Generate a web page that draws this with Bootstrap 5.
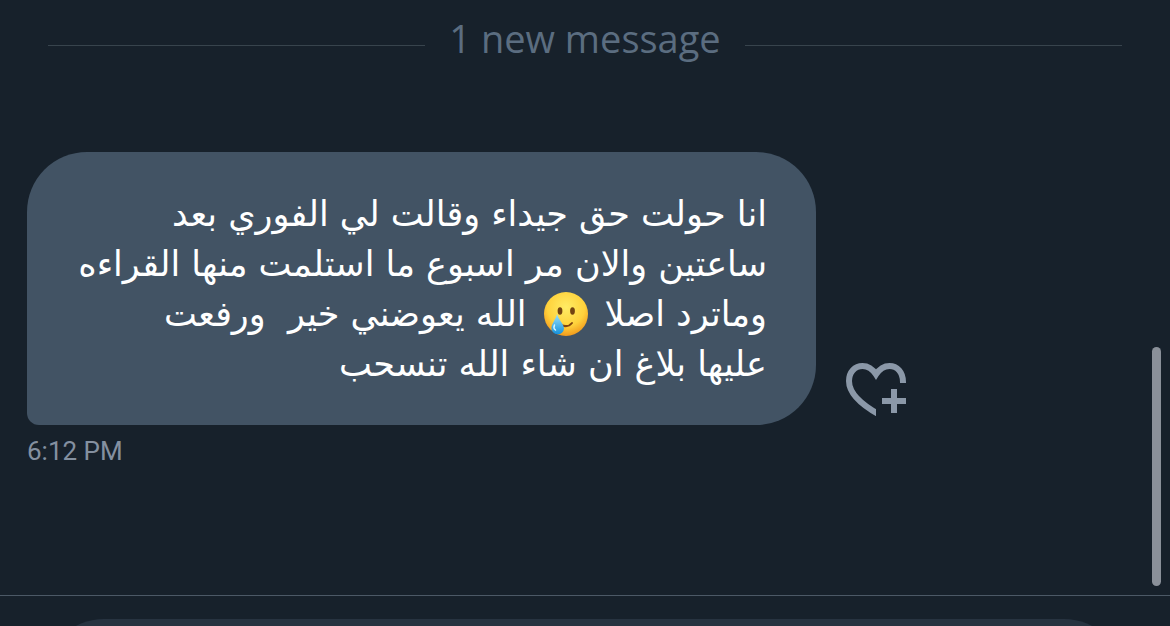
<!DOCTYPE html>
<html lang="en" data-bs-theme="dark">
<head>
<meta charset="utf-8">
<meta name="viewport" content="width=device-width, initial-scale=1">
<title>Messages</title>
<link href="https://cdn.jsdelivr.net/npm/bootstrap@5.3.0/dist/css/bootstrap.min.css" rel="stylesheet">
<style>
  body { background: #17212b; font-family: "Open Sans", "Noto Sans", sans-serif; }
  .new-divider { gap: 24px; padding: 8px 48px 0; color: #5b6d80; font-size: 38px; line-height: 60px; }
  .new-divider .rule { height: 1px; background: #38444d; margin-top: 14px; }
  .message-row { padding: 84px 27px 0; gap: 30px; }
  .bubble { width: 789px; padding: 37px 49px 36px; background: #425364; color: #fff;
            border-radius: 60px 60px 60px 12px; font-family: "DejaVu Sans", sans-serif;
            font-size: 35px; line-height: 50px; }
  .bubble-line { white-space: pre; }
  .emoji-line { gap: 16px; }
  .emoji { width: 46px; height: 46px; }
  .react { margin-bottom: 8px; color: #8b98a8; line-height: 0; }
  .sent-at { padding: 8px 27px 0; font-family: Roboto, sans-serif; font-size: 26px; line-height: 36px; color: #8490a0; }
  .scroll-thumb { right: 9px; top: 347px; bottom: 40px; width: 9px; border-radius: 5px; background: #8a9099; }
  .composer { height: 31px; border-top: 1px solid #4c5966; padding: 23px 46px 0 44px; }
  .composer input { height: 120px; border-radius: 60px; background: #273340; }
</style>
</head>
<body>
<div class="d-flex flex-column vh-100 overflow-hidden position-relative">
  <main class="flex-grow-1 overflow-hidden">
    <div class="new-divider d-flex align-items-center">
      <span class="rule flex-fill"></span>
      <span class="text-nowrap">1 new message</span>
      <span class="rule flex-fill"></span>
    </div>
    <div class="message-row d-flex align-items-end">
      <div class="bubble" dir="rtl" lang="ar">
        <div class="bubble-line">انا حولت حق جيداء وقالت لي الفوري بعد</div>
        <div class="bubble-line">ساعتين والان مر اسبوع ما استلمت منها القراءه</div>
        <div class="emoji-line d-flex align-items-center">
          <span class="bubble-line">وماترد اصلا</span>
          <svg class="emoji flex-shrink-0" viewBox="0 0 46 46" role="img" aria-label="Smiling face with tear">
            <defs>
              <radialGradient id="face" cx=".5" cy=".35" r=".65"><stop offset="0" stop-color="#ffec65"/><stop offset=".65" stop-color="#ffd23c"/><stop offset="1" stop-color="#f29a1c"/></radialGradient>
              <linearGradient id="tear" x2="0" y2="1"><stop offset="0" stop-color="#9be3fb"/><stop offset="1" stop-color="#1691dc"/></linearGradient>
            </defs>
            <circle cx="23" cy="23" r="22" fill="url(#face)"/>
            <ellipse cx="17" cy="20" rx="2.4" ry="3.7" fill="#734311"/>
            <ellipse cx="29.5" cy="20" rx="2.4" ry="3.7" fill="#734311"/>
            <path d="M18 34Q25 37 29 32" fill="none" stroke="#82450f" stroke-width="2" stroke-linecap="round"/>
            <path d="M14 23C15 28 21 33 21 37.500A6.300 6 0 0 1 8.400 37C8.400 33 13 28 14 23Z" fill="url(#tear)"/>
            <path d="M11.500 34Q10 37 12.500 39" fill="none" stroke="#d5f5ff" stroke-width="1.500" stroke-linecap="round"/>
          </svg>
          <span class="bubble-line">الله يعوضني خير  ورفعت</span>
        </div>
        <div class="bubble-line">عليها بلاغ ان شاء الله تنسحب</div>
      </div>
      <button type="button" class="react btn p-0 border-0" aria-label="Add reaction">
        <svg width="60" height="54" viewBox="0 0 60 54" fill="none" stroke="currentColor" stroke-width="6">
          <clipPath id="half"><path d="M0 0H60V20H30V54H0Z"/></clipPath>
          <path clip-path="url(#half)" d="M57 22V19C57 9 51 3 43.500 3C38 3 33.500 6 30 11.500C26.500 6 22 3 16.500 3C9 3 3 9 3 18C3 30 14 41 34 52"/>
          <path d="M36 38H60M48 26V50"/>
        </svg>
      </button>
    </div>
    <div class="sent-at"><time>6:12 PM</time></div>
  </main>
  <form class="composer overflow-hidden flex-shrink-0">
    <input type="text" class="form-control border-0" aria-label="Message">
  </form>
  <div class="scroll-thumb position-absolute"></div>
</div>
<script src="https://cdn.jsdelivr.net/npm/bootstrap@5.3.0/dist/js/bootstrap.bundle.min.js"></script>
</body>
</html>
